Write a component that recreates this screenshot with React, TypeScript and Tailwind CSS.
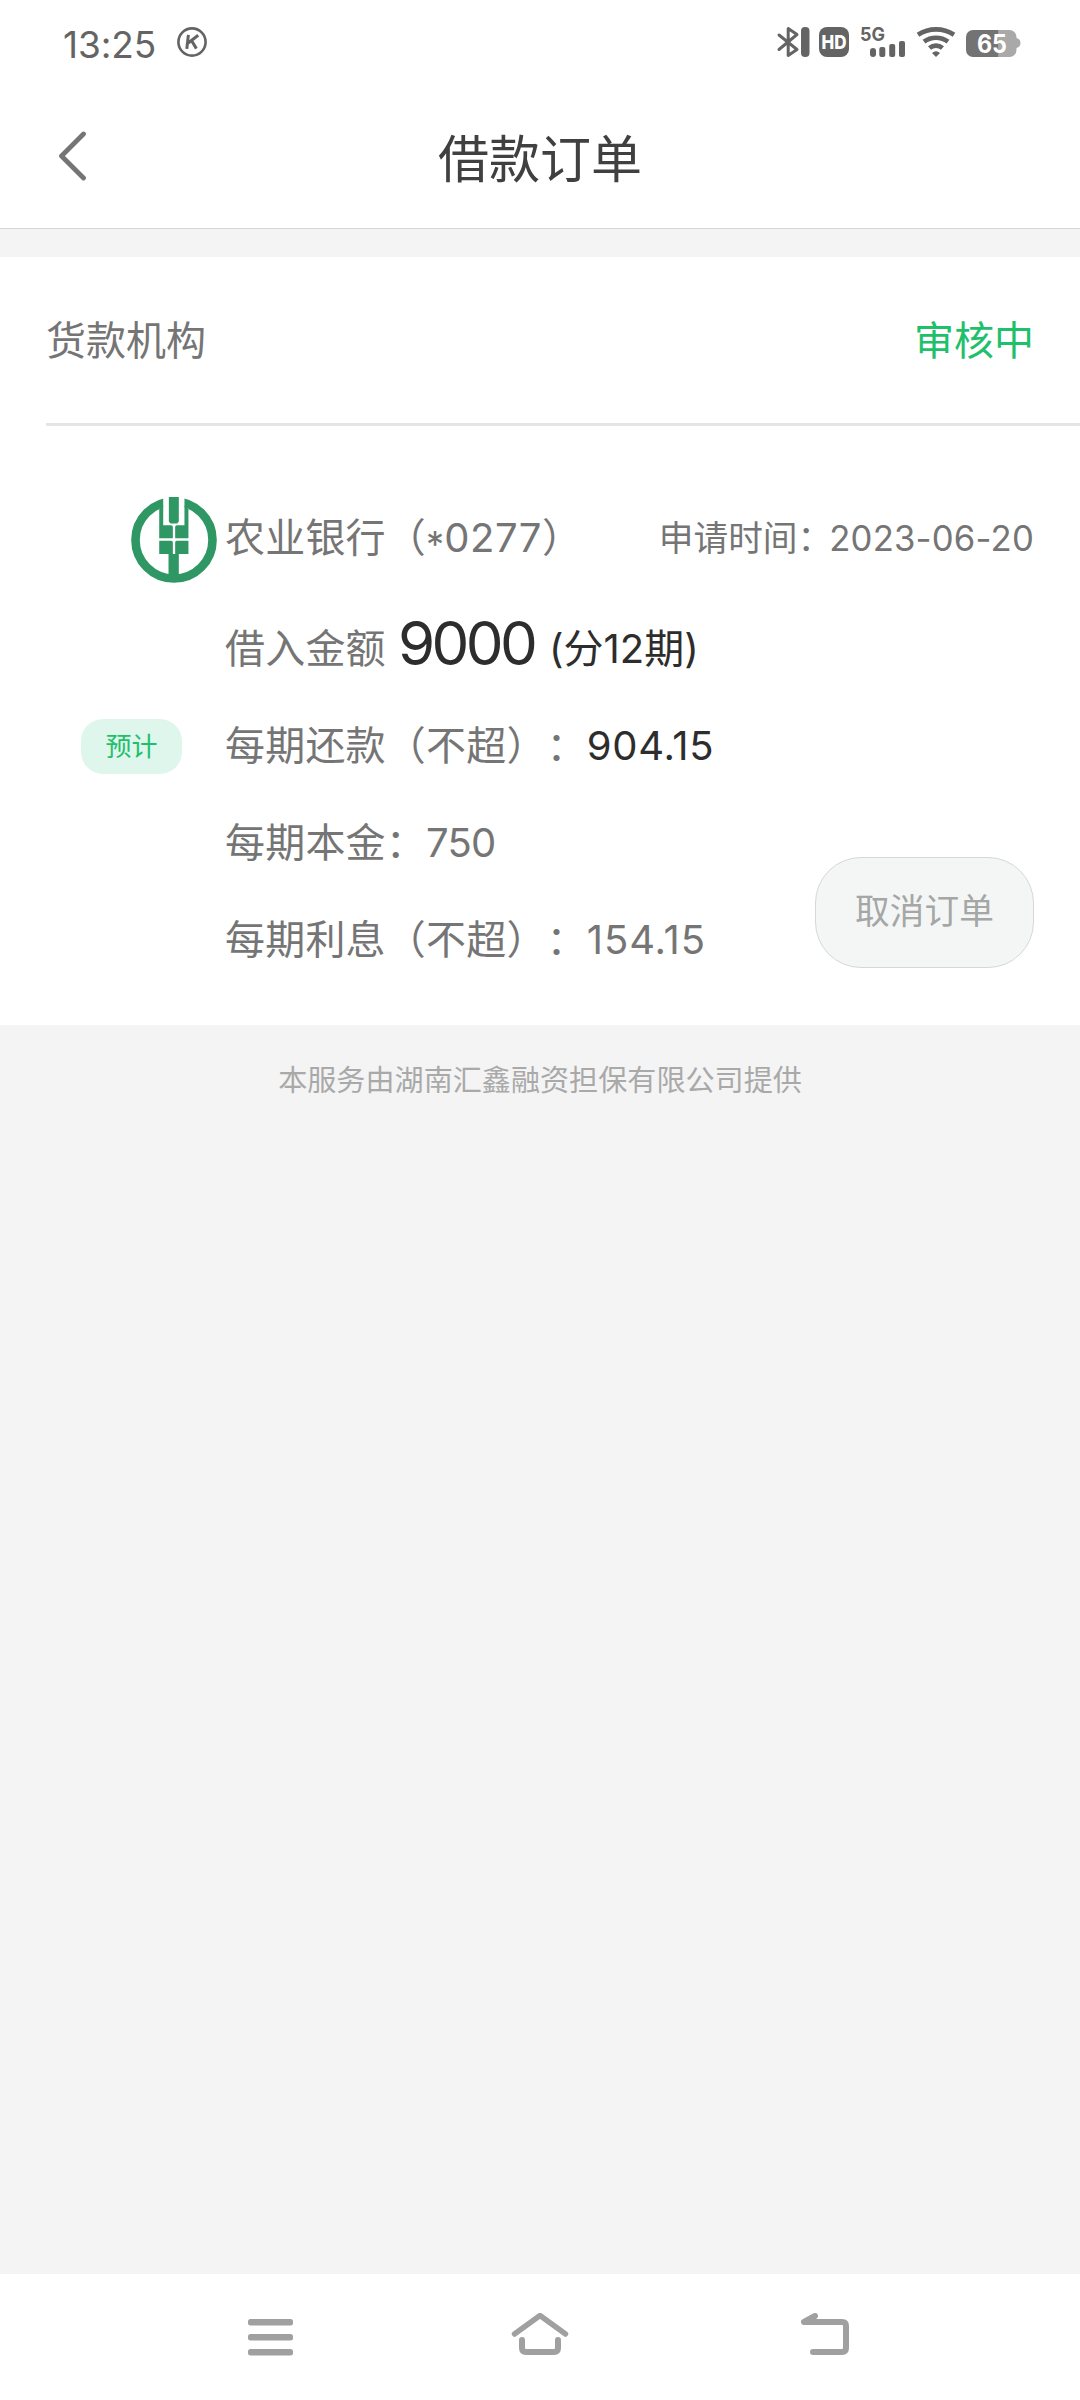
import type { ReactNode } from "react";

type Row = {
  label: string;
  value: string;
  valueClass: string;
  badge?: string;
};

const ROWS: Array<Row> = [
  {
    label: "每期还款（不超）：",
    value: "904.15",
    valueClass: "tracking-[0.7px] text-[#2d2d2d]",
    badge: "预计",
  },
  { label: "每期本金：", value: "750", valueClass: "tracking-[-0.8px]" },
  { label: "每期利息（不超）：", value: "154.15", valueClass: "tracking-[0.9px]" },
];

function StatusBar() {
  return (
    <div className="flex h-[84px] items-center justify-between pl-[63px] pr-[60px]">
      <div className="flex items-center gap-[22px] text-[#646464]">
        <span className="mt-[4px] w-[92px] text-[37px] leading-none tracking-[-0.1px] whitespace-nowrap">
          13:25
        </span>
        <svg width="30" height="30" viewBox="0 0 30 30" fill="none" stroke="currentColor">
          <circle cx="15" cy="15" r="13.6" strokeWidth="2.6" />
          <path d="M11.4 7.8 9.8 21.8M21.2 8.3 11.2 16M14.8 14 19.4 21.6" strokeWidth="3" />
        </svg>
      </div>

      <svg
        width="243"
        height="30"
        viewBox="777 27 243 30"
        fill="none"
        className="overflow-visible text-[#646464]"
      >
        <path
          d="M779 35l18 14.5-8.8 6V28.5l8.8 6L779 49.5"
          stroke="currentColor"
          strokeWidth="3"
          strokeLinecap="round"
          strokeLinejoin="round"
        />
        <rect x="801" y="27" width="8.5" height="30" rx="4" fill="currentColor" />
        <rect x="819" y="27" width="30" height="30" rx="8" fill="currentColor" />
        <text x="821.5" y="49" fontSize="19" fontWeight="800" fill="#fff" textLength="25" lengthAdjust="spacingAndGlyphs">
          HD
        </text>
        <text x="860" y="41" fontSize="19" fontWeight="700" fill="currentColor" textLength="25" lengthAdjust="spacingAndGlyphs">
          5G
        </text>
        <rect x="870" y="48" width="6" height="9" rx="3" fill="currentColor" />
        <rect x="879.3" y="47" width="6" height="10" rx="2" fill="currentColor" />
        <rect x="889.2" y="44" width="6" height="13" rx="2" fill="currentColor" />
        <rect x="899" y="41" width="6" height="16" rx="2" fill="currentColor" />
        <g stroke="currentColor" strokeWidth="4.6">
          <path d="M918 34.7a33 33 0 0 1 36 0" />
          <path d="M924 41.7a20 20 0 0 1 24 0" />
          <path d="M929.5 48a10 10 0 0 1 13 0" />
        </g>
        <path d="M932 53q4-3.4 8 0l-4 4z" fill="currentColor" />
        <path d="M998.5 30h11a7 7 0 0 1 7 7v1q4 1 4 5t-4 5v2a7 7 0 0 1-7 7h-11z" fill="#a9a9a9" />
        <path d="M973 30h25.5v27H973a7 7 0 0 1-7-7V37a7 7 0 0 1 7-7z" fill="#737373" />
        <text x="977" y="53" fontSize="25" fontWeight="700" fill="#fff" textLength="30" lengthAdjust="spacingAndGlyphs">
          65
        </text>
      </svg>
    </div>
  );
}

function BankLogo() {
  return (
    <svg width="86" height="86" viewBox="0 0 259 259">
      <circle cx="129.5" cy="129.5" r="116" fill="none" stroke="#2f9763" strokeWidth="26" />
      <rect x="97" y="0" width="64" height="85" fill="#fff" />
      <path
        d="M114 0h30v74l-5 6h-20l-5-6zM85 36l12-10v59h23q6 0 6 5v34H85zM173 36l-12-10v59h-23q-5 0-5 5v34h40zM85 132h36q5 0 5 5v35H85zM173 132h-35q-5 0-5 5v35h40zM113 172h31v66h-31z"
        fill="#2f9763"
      />
    </svg>
  );
}

function Line({ side, children }: { side?: ReactNode; children: ReactNode }) {
  return (
    <div className="flex h-[97px] items-center">
      <div className="w-[225px] shrink-0 pl-[81px]">{side}</div>
      <div className="flex items-baseline whitespace-nowrap">{children}</div>
    </div>
  );
}

function NavBar() {
  return (
    <nav className="flex h-[126px] items-center justify-between pl-[247px] pr-[230px] pb-[3px] text-[#a0a0a0]">
      <svg width="46" height="46" viewBox="0 0 46 46" fill="currentColor">
        <rect x="1" y="6" width="45" height="6.5" rx="2.5" />
        <rect x="1" y="21" width="45" height="6.5" rx="2.5" />
        <rect x="1" y="36" width="45" height="6.5" rx="2.5" />
      </svg>
      <svg
        className="mr-[13px]"
        width="58"
        height="46"
        viewBox="0 0 58 46"
        fill="none"
        stroke="currentColor"
        strokeWidth="6"
        strokeLinecap="round"
        strokeLinejoin="round"
      >
        <path d="M3.5 21 29 2.5 54.5 21" strokeWidth="5.5" />
        <path d="M11 27v8q0 4 4 4h28q4 0 4-4v-8" />
      </svg>
      <svg
        width="50"
        height="46"
        viewBox="0 0 50 46"
        fill="none"
        stroke="currentColor"
        strokeWidth="6"
        strokeLinecap="round"
        strokeLinejoin="round"
      >
        <path d="M15 3 4 9h38q4 0 4 4v22q0 4-4 4H13" />
      </svg>
    </nav>
  );
}

export default function App() {
  return (
    <div className="flex h-[2400px] w-[1080px] flex-col overflow-hidden bg-white font-['Inter','Noto_Sans_CJK_SC',sans-serif] text-[#757575] [text-spacing-trim:space-all]">
      <StatusBar />

      <header className="flex h-[145px] items-center border-b border-[#d3d6d5] pb-[1px]">
        <div className="w-[120px] pl-[58px]">
          <svg width="30" height="50" viewBox="0 0 30 50" fill="none">
            <path
              d="M25.5 3 3.5 25l22 22"
              stroke="#757575"
              strokeWidth="4.8"
              strokeLinecap="round"
              strokeLinejoin="round"
            />
          </svg>
        </div>
        <h1 className="flex-1 pt-[7px] text-center text-[51px] leading-none text-[#404040]">借款订单</h1>
        <div className="w-[120px]" />
      </header>

      <main className="flex-1 bg-[#f4f4f4] pt-[28px]">
        <section className="h-[768px] bg-white text-[40px]">
          <div className="ml-[46px] flex h-[169px] items-center justify-between border-b-[3px] border-[#e5e5e5] pt-[2px] pr-[46px]">
            <span>货款机构</span>
            <span className="text-[#1ec06b]">审核中</span>
          </div>

          <div className="mt-[50px] flex h-[124px] items-center">
            <div className="mt-[4px] w-[225px] shrink-0 pl-[131px]">
              <BankLogo />
            </div>
            <span className="flex-1 tracking-[0.2px] whitespace-nowrap">
              农业银行（
              <span className="align-[-5px] text-[36px] leading-none">*</span>
              <span className="tracking-[0.5px]">0277</span>）
            </span>
            <span className="pr-[46px] text-[34.7px] whitespace-nowrap">
              申请时间：<span className="-ml-[3px] tracking-[0.2px]">2023-06-20</span>
            </span>
          </div>

          <div className="flex justify-between">
            <div>
              <Line>
                <span className="mb-[8px] w-[173px] tracking-[0.2px]">借入金额</span>
                <span className="mb-[8px] w-[151px] translate-y-[2px] text-[60px] leading-none tracking-[-3.6px] text-[#2d2d2d]">
                  9000
                </span>
                <span className="mb-[8px] text-[40px] text-[#2d2d2d]">(分12期)</span>
              </Line>
              {ROWS.map((row) => (
                <Line
                  key={row.label}
                  side={
                    row.badge && (
                      <span className="mt-[2px] flex h-[55px] w-[101px] items-center justify-center rounded-[22px] bg-[#dff6ed] text-[26px] text-[#1ec06b]">
                        {row.badge}
                      </span>
                    )
                  }
                >
                  <span className="tracking-[0.2px]">{row.label}</span>
                  <span className={row.valueClass}>{row.value}</span>
                </Line>
              ))}
            </div>
            <button className="mr-[46px] mb-[20px] h-[111px] w-[219px] self-end rounded-[46px] border border-[#d6d8d7] bg-[#f4f6f5] pb-[2px] text-[34.7px] text-[#a5a6a6]">
              取消订单
            </button>
          </div>
        </section>

        <p className="pt-[34px] text-center text-[29.1px] text-[#a9a9a9]">
          本服务由湖南汇鑫融资担保有限公司提供
        </p>
      </main>

      <NavBar />
    </div>
  );
}
